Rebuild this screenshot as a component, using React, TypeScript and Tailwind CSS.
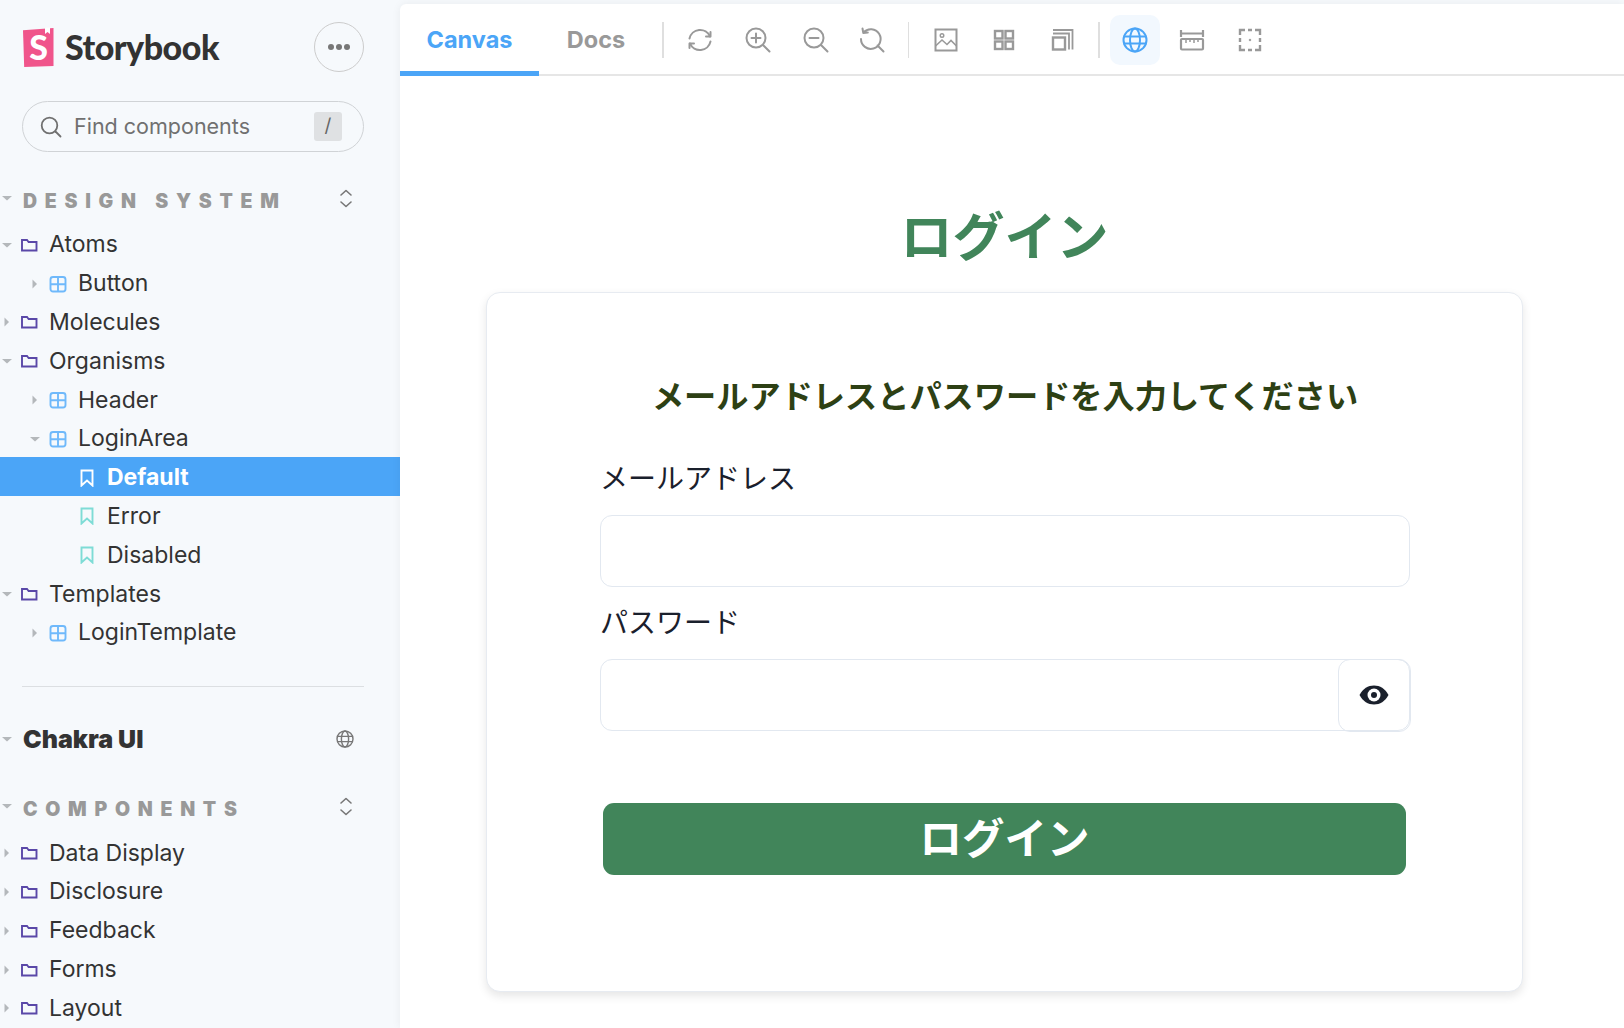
import React from "react";

const Caret = ({ open, light }: { open?: boolean; light?: boolean }) => (
  <svg width="12" height="12" viewBox="0 0 12 12" className="shrink-0">
    {open ? <path d="M1 4h10L6 8.5z" fill="#b4b8bb" /> : <path d="M3.5 1.5v9L8 6z" fill={light ? "#c4c8ca" : "#b4b8bb"} />}
  </svg>
);
const Folder = () => (
  <svg width="18" height="16" viewBox="0 0 18 16" fill="none" stroke="#5a48a8" strokeWidth="1.9" className="shrink-0">
    <path d="M2 3h5l1.6 2H16.5v8.5H2z" />
  </svg>
);
const Comp = () => (
  <svg width="18" height="18" viewBox="0 0 18 18" fill="none" stroke="#6fb9fb" strokeWidth="1.9" className="shrink-0">
    <rect x="1.5" y="2" width="15" height="14.5" rx="2.5" />
    <path d="M9 2v14.5M1.5 9.2h15" />
  </svg>
);
const Bookmark = ({ white }: { white?: boolean }) => (
  <svg width="14" height="18" viewBox="0 0 14 18" fill="none" stroke={white ? "#ffffff" : "#7edcd6"} strokeWidth="1.9" className="shrink-0">
    <path d="M1.5 1.5h11v15L7 11.5l-5.5 5z" />
  </svg>
);
const UpDown = () => (
  <svg width="14" height="19" viewBox="0 0 14 19" fill="none" stroke="#777" strokeWidth="1.6" strokeLinecap="round" strokeLinejoin="round">
    <path d="M2 6l5-4.5L12 6M2 13l5 4.5L12 13" />
  </svg>
);

const Row = ({ level, label, kind, open, active }: { level: 0 | 1 | 2; label: string; kind: "f" | "c" | "s"; open?: boolean; active?: boolean }) => (
  <div className={`flex items-center h-[38.8px] pt-[3px] ${active ? "bg-[#4ba5f7] text-white font-bold" : "text-[#333333]"}`}>
    {level === 0 && <div className="w-[20px] shrink-0 pl-[1px]"><Caret open={open} /></div>}
    {level === 1 && <div className="w-[49px] shrink-0 pl-[29px]"><Caret open={open} /></div>}
    {level === 2 && <div className="w-[80px] shrink-0" />}
    <div className={`${level === 2 ? "w-[27px]" : "w-[29px]"} shrink-0 flex`}>{kind === "f" ? <Folder /> : kind === "c" ? <Comp /> : <Bookmark white={active} />}</div>
    <span className="text-[23px] leading-none">{label}</span>
  </div>
);

const Section = ({ title }: { title: string }) => (
  <div className="flex items-center h-[38px] pr-[47px] pl-[1px]">
    <div className="w-[22px] shrink-0 -mt-[4px]"><Caret open /></div>
    <span className="text-[19.5px] font-black text-[#999999] tracking-[0.395em] pt-[3px]">{title}</span>
    <span className="ml-auto flex -mt-[3px]"><UpDown /></span>
  </div>
);

const Tool = ({ children, active }: { children: React.ReactNode; active?: boolean }) => (
  <div className={`w-[50px] h-[50px] mt-[2px] rounded-[10px] flex items-center justify-center ${active ? "bg-[#f2f8fe] mr-[7px]" : "mr-[8px]"}`}>{children}</div>
);

const ic = { width: 28, height: 28, viewBox: "0 0 28 28", fill: "none", stroke: "#999999", strokeWidth: 2, strokeLinecap: "round" as const, strokeLinejoin: "round" as const };

export default function App() {
  return (
    <div className="flex w-[1624px] h-[1028px] overflow-hidden bg-[#f6f9fc] font-[Inter,'Noto_Sans_CJK_JP',sans-serif]">
      <aside className="w-[400px] shrink-0 flex flex-col">
        <div className="flex items-center h-[50px] mt-[22px] pl-[22px] pr-[36px]">
          <svg width="33" height="41" viewBox="0 0 33 41" className="shrink-0">
            <path d="M1 3.2 L31.5 1 V39 L2.2 40 Z" fill="#f0558b" />
            <path d="M23 0.8 L28 0.5 V7 L25.5 5 L23 7 Z" fill="#ffffff" />
            <text x="16.5" y="33" textAnchor="middle" fontSize="34" fontWeight="900" fill="#ffffff" fontFamily="Lato, sans-serif">S</text>
          </svg>
          <span className="ml-[10px] -mt-[2px] text-[34px] font-black tracking-[-0.5px] text-[#333333] font-[Lato,sans-serif]">Storybook</span>
          <div className="ml-auto w-[50px] h-[50px] rounded-full border-[1.5px] border-[#cccccc] flex items-center justify-center gap-[2px]">
            <span className="w-[6px] h-[6px] rounded-full bg-[#777777]" />
            <span className="w-[6px] h-[6px] rounded-full bg-[#777777]" />
            <span className="w-[6px] h-[6px] rounded-full bg-[#777777]" />
          </div>
        </div>
        <div className="mt-[29px] ml-[22px] mr-[36px] h-[51px] rounded-full border-[1.5px] border-[#d0d3d6] flex items-center pl-[17px] pr-[21px]">
          <svg width="22" height="22" viewBox="0 0 22 22" fill="none" stroke="#707070" strokeWidth="1.8" strokeLinecap="round" className="shrink-0">
            <circle cx="9.5" cy="9.5" r="7.8" /><path d="M15.5 15.5L20.5 20.5" />
          </svg>
          <span className="ml-[12px] text-[21.5px] text-[#707070]">Find components</span>
          <span className="ml-auto w-[28px] h-[29px] rounded-[3px] bg-[#dfe1e3] flex items-center justify-center text-[19px] text-[#666666]">/</span>
        </div>
        <div className="mt-[29px] mb-[5px]"><Section title="DESIGN SYSTEM" /></div>
        <Row level={0} label="Atoms" kind="f" open />
        <Row level={1} label="Button" kind="c" />
        <Row level={0} label="Molecules" kind="f" />
        <Row level={0} label="Organisms" kind="f" open />
        <Row level={1} label="Header" kind="c" />
        <Row level={1} label="LoginArea" kind="c" open />
        <Row level={2} label="Default" kind="s" active />
        <Row level={2} label="Error" kind="s" />
        <Row level={2} label="Disabled" kind="s" />
        <Row level={0} label="Templates" kind="f" open />
        <Row level={1} label="LoginTemplate" kind="c" />
        <div className="mt-[35px] ml-[22px] mr-[36px] h-[1.5px] bg-[#dcdfe2]" />
        <div className="mt-[33px] flex items-center h-[38px] pr-[46px] pl-[1px]">
          <div className="w-[22px] shrink-0"><Caret open /></div>
          <span className="text-[25px] font-black text-[#333333]">Chakra UI</span>
          <svg width="18" height="18" viewBox="0 0 18 18" fill="none" stroke="#777" strokeWidth="1.4" className="ml-auto">
            <circle cx="9" cy="9" r="8" /><ellipse cx="9" cy="9" rx="3.6" ry="8" /><path d="M1 6.4h16M1 11.6h16" />
          </svg>
        </div>
        <div className="mt-[31px] mb-[5px]"><Section title="COMPONENTS" /></div>
        <Row level={0} label="Data Display" kind="f" />
        <Row level={0} label="Disclosure" kind="f" />
        <Row level={0} label="Feedback" kind="f" />
        <Row level={0} label="Forms" kind="f" />
        <Row level={0} label="Layout" kind="f" />
      </aside>

      <main className="flex-1 mt-[4px] bg-white rounded-tl-[6px] shadow-[0_0_10px_rgba(0,0,0,0.06)] flex flex-col min-w-0">
        <div className="h-[72px] shrink-0 border-b-[2px] border-[#e6e6e6] flex items-center">
          <div className="w-[139px] h-[72px] self-start flex items-center justify-center border-b-[5px] border-[#4ba5f7] text-[23.5px] font-bold text-[#4ba5f7] pt-[5px]">
            Canvas
          </div>
          <div className="w-[114px] text-center text-[23.5px] font-bold text-[#999999] pt-[2px]">Docs</div>
          <div className="w-[1.5px] h-[36px] mt-[2px] bg-[#dfdfdf] mr-[11px] ml-[9px]" />
          <Tool>
            <svg {...ic}><path d="M3.5 12.5A10.8 10.8 0 0 1 24 10.5M24.5 15.5A10.8 10.8 0 0 1 4 17.5" /><path d="M20 10.5h4.5V6M8 17.5H3.5V22" /></svg>
          </Tool>
          <Tool>
            <svg {...ic}><circle cx="12" cy="12" r="9.5" /><path d="M19 19l6.5 6.5M12 7.5v9M7.5 12h9" /></svg>
          </Tool>
          <Tool>
            <svg {...ic}><circle cx="12" cy="12" r="9.5" /><path d="M19 19l6.5 6.5M7.5 12h9" /></svg>
          </Tool>
          <div className="-ml-[2px]">
            <Tool>
              <svg {...ic}><path d="M5.5 6.5A9.8 9.8 0 1 1 3 13M4.5 2.5l.8 4.5 4.5-.5M19.5 19.5l6 6" /></svg>
            </Tool>
          </div>
          <div className="w-[1.5px] h-[36px] mt-[2px] bg-[#dfdfdf] mr-[12px] ml-[3px]" />
          <Tool>
            <svg {...ic} strokeLinecap="butt" strokeLinejoin="miter"><rect x="3.5" y="3.5" width="21" height="21" /><path d="M3.5 20l6.5-6 5 4.5 4-4 5.5 5.5" strokeWidth="1.6" /><circle cx="10" cy="9.5" r="1.8" strokeWidth="1.4" /></svg>
          </Tool>
          <Tool>
            <svg {...ic} strokeLinecap="butt" strokeLinejoin="miter" strokeWidth={2.4}><rect x="5" y="5" width="7.5" height="7.5" /><rect x="15.5" y="5" width="7.5" height="7.5" /><rect x="5" y="15.5" width="7.5" height="7.5" /><rect x="15.5" y="15.5" width="7.5" height="7.5" /></svg>
          </Tool>
          <Tool>
            <svg {...ic} strokeLinecap="butt" strokeLinejoin="miter"><rect x="5" y="11.5" width="12" height="12" strokeWidth="2.4" /><path d="M5 7.5h16v16M5 4h19.5v19.5" strokeWidth="1.8" /></svg>
          </Tool>
          <div className="w-[1.5px] h-[36px] mt-[2px] bg-[#dfdfdf] ml-[3px] mr-[10px]" />
          <Tool active>
            <svg width="26" height="26" viewBox="0 0 26 26" fill="none" stroke="#4ba5f7" strokeWidth="2">
              <circle cx="13" cy="13" r="11.5" /><ellipse cx="13" cy="13" rx="5" ry="11.5" /><path d="M1.5 9.5h23M1.5 16.5h23" />
            </svg>
          </Tool>
          <Tool>
            <svg {...ic} strokeLinecap="butt" strokeLinejoin="miter" strokeWidth={2.2}><path d="M3 4v7M25 4v7M3 7.5h22" /><rect x="3" y="13" width="22" height="10.5" rx="1" /><path d="M8 13v4M12 13v3M16 13v4M20 13v3" strokeWidth="1.5" /></svg>
          </Tool>
          <Tool>
            <svg {...ic} strokeLinecap="butt" strokeLinejoin="miter" strokeWidth={2.4}><path d="M4 9V4h5M19 4h5v5M24 19v5h-5M9 24H4v-5M12 4h4M12 24h4M4 12v4M24 12v4" /><circle cx="14" cy="14" r="0.8" fill="#999999" strokeWidth="1" /></svg>
          </Tool>
        </div>

        <div className="flex-1 flex flex-col items-center pr-[15px] min-h-0">
          <h1 className="mt-[137px] h-[52px] leading-[52px] text-[52px] font-bold text-[#41855a] font-['Liberation_Serif','Noto_Sans_CJK_JP',serif]">ログイン</h1>
          <div className="mt-[27px] w-[1037px] shrink-0 bg-white rounded-[14px] border border-[#e7ebf1] shadow-[0_4px_10px_rgba(0,0,0,0.1)] pl-[113px] pr-[112px] pt-[82px] pb-[116px]">
            <h2 className="h-[44px] leading-[44px] text-center text-[32.2px] font-bold text-[#2d4014]">メールアドレスとパスワードを入力してください</h2>
            <label className="block mt-[40px] h-[40px] leading-[40px] text-[28px] text-[#1a202c]">メールアドレス</label>
            <div className="mt-[16px] h-[72px] rounded-[12px] border-[1.5px] border-[#e2e8f0]" />
            <label className="block mt-[16px] h-[40px] leading-[40px] text-[28px] text-[#1a202c]">パスワード</label>
            <div className="mt-[16px] h-[72px] flex rounded-[12px] border-[1.5px] border-[#e2e8f0]">
              <div className="flex-1" />
              <div className="w-[73px] -my-[1.5px] -mr-[1.5px] rounded-[12px] border-[1.5px] border-[#e2e8f0] flex items-center justify-center">
                <svg width="30" height="20" viewBox="0 0 30 20">
                  <path d="M0.5 10C4 3.5 9 0.5 15 0.5S26 3.5 29.5 10C26 16.5 21 19.5 15 19.5S4 16.5 0.5 10Z" fill="#1a202c" />
                  <circle cx="15" cy="10" r="6.5" fill="#ffffff" />
                  <circle cx="15" cy="10" r="3" fill="#1a202c" />
                </svg>
              </div>
            </div>
            <button className="mt-[72px] mx-[3px] w-[803px] h-[72px] rounded-[11px] bg-[#41855a] text-white text-[42.5px] font-bold flex items-center justify-center">ログイン</button>
          </div>
        </div>
      </main>
    </div>
  );
}
